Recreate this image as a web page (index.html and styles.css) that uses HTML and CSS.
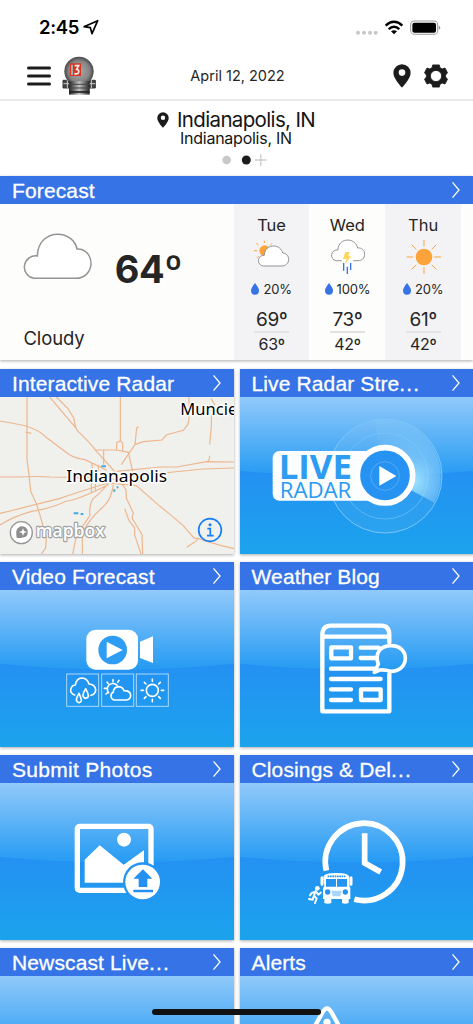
FILE: index.html
```html
<!DOCTYPE html>
<html lang="en">
<head>
<meta charset="utf-8">
<title>Weather</title>
<link rel="stylesheet" href="styles.css">
</head>
<body>
<svg class="defs" width="0" height="0">
  <defs>
    <linearGradient id="lower" x1="0" y1="0" x2="0" y2="1"><stop offset="0" stop-color="#2491f2"/><stop offset=".48" stop-color="#2491f2"/><stop offset="1" stop-color="#1ba3ed"/></linearGradient>
    <linearGradient id="upper" x1="0" y1="0" x2="0" y2="1"><stop offset="0" stop-color="#91c9fa"/><stop offset="1" stop-color="#259bf3"/></linearGradient>
    <radialGradient id="beam" gradientUnits="userSpaceOnUse" cx="535" cy="350" r="160"><stop offset="0" stop-color="#a5e8ff" stop-opacity=".95"/><stop offset=".5" stop-color="#8fd0fa" stop-opacity=".5"/><stop offset="1" stop-color="#8fd0fa" stop-opacity=".12"/></radialGradient>
    <radialGradient id="dome" cx=".5" cy=".5" r=".55"><stop offset="0" stop-color="#aaa"/><stop offset=".65" stop-color="#858585"/><stop offset="1" stop-color="#303030"/></radialGradient>
    <linearGradient id="metal"><stop offset="0" stop-color="#222"/><stop offset=".5" stop-color="#c4c4c4"/><stop offset="1" stop-color="#222"/></linearGradient>
    <symbol id="gloss" viewBox="0 0 702 471"><rect width="702" height="471" fill="url(#lower)"/><path d="M0 0H702V221Q351 256 0 221Z" fill="url(#upper)"/></symbol>
    <symbol id="chevron" viewBox="0 0 10 18"><path d="M1.500 1.300L8 9L1.500 16.700" fill="none" stroke="#fff" stroke-width="1.300"/></symbol>
    <symbol id="pin" viewBox="0 0 18 24"><path d="M9 .3A8.600 8.600 0 0 0 .4 8.900C.4 15 9 23.500 9 23.500S17.600 15 17.600 8.900A8.600 8.600 0 0 0 9 .3ZM9 5.300A3.300 3.300 0 1 1 9 11.900A3.300 3.300 0 0 1 9 5.300Z" fill="#1c1c1c" fill-rule="evenodd"/></symbol>
    <symbol id="drop" viewBox="0 0 8 12"><path d="M4 0C6 3 8 5 8 7.600A4 4.200 0 0 1 0 7.600C0 5 2 3 4 0Z" fill="#3573e6"/></symbol>
  </defs>
</svg>
<div class="screen">
  <header class="status">
    <span class="clock">2:45</span>
    <svg class="locate" viewBox="250 57 50 50"><path d="M253 80L294 62L277 101L272 83Z" fill="none" stroke="#000" stroke-width="5" stroke-linejoin="round"/></svg>
    <svg class="signals" viewBox="360 55 260 50">
      <g fill="#c8c8c8"><circle cx="369" cy="96" r="6"/><circle cx="387" cy="96" r="6"/><circle cx="405" cy="96" r="6"/><circle cx="422" cy="96" r="6"/></g>
      <g fill="none" stroke="#000" stroke-width="7"><path d="M452 75Q477 52 502 75"/><path d="M461 85Q477 71 493 85"/></g><path d="M468 92Q477 85 486 92L477 101Z"/>
      <rect x="527" y="61" width="81" height="40" rx="11" fill="none" stroke="#999" stroke-width="3"/><rect x="532" y="66" width="71" height="30" rx="6"/><path d="M611 75Q616 76 616 81T611 87Z" fill="#999"/>
    </svg>
  </header>
  <nav class="toolbar">
    <svg class="menu" viewBox="0 0 24 20"><path d="M1.500 2H22.500M1.500 10H22.500M1.500 18H22.500" stroke="#1c1c1c" stroke-width="3" stroke-linecap="round"/></svg>
    <svg class="logo" viewBox="187 168 105 118">
      <path d="M208 240H270V284H208Z" fill="url(#metal)"/><path d="M208 276H270" stroke="#222" stroke-width="5"/>
      <path d="M190 241H287V264H190Z" fill="#444" stroke="#333" stroke-width="3"/><path d="M191 251H287M203 240V264M275 240V264" stroke="#ccc" stroke-width="3"/>
      <circle cx="238" cy="214" r="44" fill="url(#dome)"/><path d="M208 244H270V268H208Z" fill="url(#metal)"/><path d="M208 253H270M208 264H270" stroke="#444" stroke-width="3"/>
      <rect x="211" y="190" width="33" height="38" fill="#d83520"/><path d="M217 194V225" stroke="#9bc4d0" stroke-width="5"/><path d="M225 197H237L231 208Q239 209 237 217Q235 224 224 221" fill="none" stroke="#eee" stroke-width="5"/>
    </svg>
    <span class="date">April 12, 2022</span>
    <svg class="place"><use href="#pin"/></svg>
    <svg class="gear" viewBox="0 0 24 24"><path fill="#1c1c1c" fill-rule="evenodd" stroke="#1c1c1c" stroke-width=".8" stroke-linejoin="round" d="M8.700.9H15.300L16 3.700L18.200 4.900L21 4L23.500 8.800L21.600 11V13L23.500 15.200L21 20L18.200 19.100L16 20.300L15.300 23.100H8.700L8 20.300L5.800 19.100L3 20L.5 15.200L2.400 13V11L.5 8.800L3 4L5.800 4.900L8 3.700ZM12 6.400A5.600 5.600 0 1 0 12 17.600A5.600 5.600 0 0 0 12 6.400Z"/></svg>
  </nav>
  <section class="location">
    <div class="city"><svg class="city-pin"><use href="#pin"/></svg><span>Indianapolis, IN</span></div>
    <div class="sub">Indianapolis, IN</div>
    <svg class="pager" viewBox="300 160 145 40"><circle cx="320" cy="181" r="13" fill="#c8c8c8"/><circle cx="379" cy="181" r="13.500" fill="#1c1c1c"/><path d="M405 181H440M422.500 164V199" stroke="#ccc" stroke-width="4"/></svg>
  </section>
  <section class="forecast">
    <h2 class="title"><span>Forecast</span><svg><use href="#chevron"/></svg></h2>
    <div class="forecast-body">
      <div class="now">
        <div class="now-row">
          <svg class="cloud" viewBox="66 190 212 140"><path d="M102 326A33 33 0 1 1 112 259C113 212 146 194 173 194C202 194 226 212 231 238C256 237 273 257 273 281C273 307 253 326 228 326Z" fill="#fff" stroke="#949494" stroke-width="4.500"/></svg>
          <span class="temp">64º</span>
        </div>
        <div class="cond">Cloudy</div>
      </div>
      <div class="day tint">
        <div class="name">Tue</div>
        <svg class="sky" viewBox="70 200 112 116"><circle cx="105" cy="241" r="16" fill="#fda33b"/><path d="M104 211V218M80 218L86 225M73 241H83M127 219L122 225M81 263L87 257" stroke="#fda33b" stroke-width="3"/><path d="M101 287A16 16 0 1 1 104 255C105 234 119 227 132 227C146 227 157 237 159 248C170 248 177 257 177 267C177 280 167 287 156 287Z" fill="#fff" stroke="#949494" stroke-width="3"/></svg>
        <div class="rain"><svg><use href="#drop"/></svg>20%</div>
        <div class="high">69º</div><div class="low">63º</div>
      </div>
      <div class="day">
        <div class="name">Wed</div>
        <svg class="sky" viewBox="296 200 112 116"><path d="M334 271H317A16 16 0 1 1 323 239C323 219 338 209 352 209C367 209 380 220 382 233C395 231 403 241 403 252C403 264 395 271 383 271H369" fill="#fff" stroke="#949494" stroke-width="3"/><path d="M345 245H358L354 258H363L343 282L349 266H338Z" fill="#fdd75b"/><path d="M340 278V301M351 289V311M361 278V299" stroke="#3573e6" stroke-width="4"/></svg>
        <div class="rain"><svg><use href="#drop"/></svg>100%</div>
        <div class="high">73º</div><div class="low">42º</div>
      </div>
      <div class="day tint">
        <div class="name">Thu</div>
        <svg class="sky" viewBox="523 200 112 116"><circle cx="580" cy="260" r="25" fill="#fda33b"/><path d="M580 208V228M580 291V311M528 260H548M611 260H631M543 223L557 237M603 283L617 297M543 297L557 283M603 237L617 223" stroke="#fda33b" stroke-width="3"/></svg>
        <div class="rain"><svg><use href="#drop"/></svg>20%</div>
        <div class="high">61º</div><div class="low">42º</div>
      </div>
    </div>
  </section>
  <main class="tiles">
    <article class="tile">
      <h2 class="title"><span>Interactive Radar</span><svg><use href="#chevron"/></svg></h2>
      <svg class="art" viewBox="0 97 702 471">
        <rect y="97" width="702" height="471" fill="#f0f0ed"/>
        <g fill="none" stroke="#edb68d" stroke-width="3.500">
          <path d="M81 97V285Q88 330 92 380L110 419L124 465L139 520L137 550L124 568"/><path d="M0 169Q45 176 78 184Q120 198 138 218L205 268Q225 281 255 285L320 317M76 202L94 206"/>
          <path d="M149 97L228 190L234 200Q269 232 285 255L345 322M169 97L204 132L221 160L228 190"/><path d="M361 97V228L350 234V255M361 228L368 235V260M285 256H350L385 263L398 320M311 256V300"/>
          <path d="M416 186L410 190L405 240L364 300M405 240L430 231L486 226L500 210L550 197L563 180L567 165V97M633 102L643 118L634 160V185L629 240M629 273Q629 287 621 291"/>
          <path d="M350 320L480 307H530L620 291L702 292M350 340L520 322L610 313L702 310"/><path d="M0 337H50Q120 334 150 337L320 340L400 355M325 355L409 363L474 420L510 449L549 482L583 521H595L615 529L665 543L702 552M598 521L583 533L560 548"/>
          <path d="M325 355Q240 380 180 401L30 439L0 446M325 360Q230 407 200 409Q150 433 95 440Q40 455 0 481M325 355Q310 378 278 403Q266 425 270 453L230 510L218 568M340 360Q334 405 310 426Q270 460 247 505V568"/>
          <path d="M360 350L378 375L379 400L400 445L396 460L426 510L428 568M374 432L387 468L404 490V510L423 568M276 295V320M295 300V320M274 355V385M286 357V378"/>
        </g>
        <path d="M304 305H318M343 374V381M350 369L355 367M221 446H235M242 448H250" stroke="#46a8dc" stroke-width="6"/>
        <g class="label"><text x="541" y="151" textLength="171" lengthAdjust="spacingAndGlyphs">Muncie</text><text x="199" y="351" textLength="302" lengthAdjust="spacingAndGlyphs">Indianapolis</text></g>
        <circle cx="64" cy="504" r="33" fill="#fff" stroke="#969696" stroke-width="4"/><path d="M50 519Q45 492 59 486Q76 481 83 497Q87 518 66 519Q57 521 50 519Z" fill="#8e8e8e"/><path d="M69 490L72 499L81 502L72 505L69 514L66 505L57 502L66 499Z" fill="#fff"/>
        <text class="mapbox" x="107" y="518" textLength="208" lengthAdjust="spacingAndGlyphs">mapbox</text>
        <circle cx="630" cy="496" r="34" fill="none" stroke="#147efb" stroke-width="5"/><circle cx="630" cy="480" r="4.500" fill="#147efb"/><path d="M622 492H631V512M621 513H641" fill="none" stroke="#147efb" stroke-width="5"/>
      </svg>
    </article>
    <article class="tile">
      <h2 class="title"><span>Live Radar Stre<i>...</i></span><svg><use href="#chevron"/></svg></h2>
      <svg class="art" viewBox="0 0 702 471"><use href="#gloss"/><g transform="translate(-14 -97)">
        <g fill="#fff" fill-opacity=".06" stroke="#7ac7fa" stroke-width="3"><circle cx="449" cy="334" r="171"/><circle cx="449" cy="334" r="129" fill="none" stroke-opacity=".6"/></g>
        <path d="M449 334L417 166A171 171 0 0 1 597 414Z" fill="url(#beam)"/>
        <rect x="112" y="259" width="330" height="149" rx="20" fill="#fcfdfe"/><circle cx="449" cy="332" r="83" fill="#2693f2" stroke="#fff" stroke-width="17"/>
        <circle cx="449" cy="334" r="43" fill="none" stroke="#52acf5" stroke-width="3"/><path d="M432 304L483 334L432 363Z" fill="#fff"/>
        <text class="live" x="130" y="343" textLength="220" lengthAdjust="spacingAndGlyphs">LIVE</text><text class="radar" x="133" y="399" textLength="215" lengthAdjust="spacingAndGlyphs">RADAR</text>
      </g></svg>
    </article>
    <article class="tile">
      <h2 class="title"><span>Video Forecast</span><svg><use href="#chevron"/></svg></h2>
      <svg class="art" viewBox="0 0 702 471"><use href="#gloss"/><g transform="translate(0 -97)">
        <rect x="259" y="216" width="155" height="120" rx="28" fill="#fff"/><path d="M420 252L459 236V316L420 301Z" fill="#fff"/><circle cx="338" cy="277" r="43" fill="#2f9df3"/><path d="M320 252L368 277L320 302Z" fill="#fff"/>
        <g fill="none" stroke="#a9d9fb" stroke-width="3"><rect x="200" y="349" width="96" height="97"/><rect x="305" y="349" width="96" height="97"/><rect x="409" y="349" width="96" height="97"/></g>
        <g fill="none" stroke="#fff" stroke-width="4.800" stroke-linecap="round" stroke-linejoin="round">
          <path d="M224 412Q211 408 212 396Q214 383 226 382Q229 362 246 361Q262 362 267 379Q285 380 287 396Q287 409 273 413M237 407Q229 420 229 427Q230 434 237 435Q245 433 244 427Q243 420 237 407ZM257 393Q249 405 249 413Q250 421 257 422Q266 420 265 413Q264 406 257 393Z"/>
          <path d="M342 427A13 13 0 0 1 340 403Q341 388 356 387Q368 388 372 399Q391 399 392 413Q392 426 379 427ZM326 405A16 16 0 1 1 351 383M339 366V372M357 368L353 374M321 373L325 378M313 392H320M318 409L323 405"/>
          <circle cx="457" cy="398" r="18"/><path d="M457 364V371M457 425V432M423 398H430M484 398H491M433 374L438 379M476 417L481 422M433 422L438 417M476 379L481 374"/>
        </g></g></svg>
    </article>
    <article class="tile">
      <h2 class="title"><span>Weather Blog</span><svg><use href="#chevron"/></svg></h2>
      <svg class="art" viewBox="0 0 702 471"><use href="#gloss"/><g transform="translate(-14 -97)" fill="none" stroke="#fff" stroke-width="13" stroke-linecap="round" stroke-linejoin="round">
        <path d="M462 254V232Q462 204 438 204H287Q261 204 261 232V461H462V349M261 237H462M288 269H347V302H288ZM376 270H430M376 301H420M287 333H420M287 364H436M287 395H347M287 427H347M377 395H436V427H377Z"/><path d="M433 337L417 344L429 319C417 289 434 264 467 264C494 264 510 281 510 302C510 326 490 341 467 341C456 338 445 335 433 337Z" stroke-width="11"/>
      </g></svg>
    </article>
    <article class="tile">
      <h2 class="title wide"><span>Submit Photos</span><svg><use href="#chevron"/></svg></h2>
      <svg class="art" viewBox="0 0 702 471"><use href="#gloss"/><g transform="translate(0 -100)">
        <rect x="232" y="230" width="221" height="192" rx="7" fill="none" stroke="#fff" stroke-width="16"/><circle cx="372" cy="270" r="21" fill="#fff"/><path d="M254 330L299 287L371 345L432 302V399H254Z" fill="#fff"/>
        <circle cx="428" cy="397" r="59" fill="#2495f2"/><circle cx="428" cy="397" r="52" fill="#fff"/><path d="M429 359L457 387H442V412H416V387H400ZM400 420H459V428H400Z" fill="#2491f2"/>
      </g></svg>
    </article>
    <article class="tile">
      <h2 class="title"><span>Closings &amp; Del<i>...</i></span><svg><use href="#chevron"/></svg></h2>
      <svg class="art" viewBox="0 0 702 471"><use href="#gloss"/><g transform="translate(-14 -100)">
        <path d="M273 363A116 116 0 1 1 357 449M388 251V340L436 367" fill="none" stroke="#fff" stroke-width="17"/>
        <path d="M264 383Q264 370 303 370Q342 370 342 383V408L345 416V448H340V460Q329 465 320 460V448H288V460Q278 465 267 460V448H263V416L267 408Z" fill="#fff"/>
        <path d="M272 388H302V411H272ZM305 388H335V411H305Z" fill="#2493f2"/><path d="M277 380H330" stroke="#2493f2" stroke-width="5" stroke-dasharray="5 2"/><circle cx="277" cy="427" r="8" fill="#2493f2"/><circle cx="330" cy="427" r="8" fill="#2493f2"/><path d="M288 423H319L315 440H292Z" fill="#a9d6fa"/>
        <path d="M260 384V404M347 384V404" stroke="#fff" stroke-width="9" stroke-linecap="round"/>
        <circle cx="246" cy="416" r="7" fill="#fff"/><path d="M241 424L236 438L244 446L239 460M236 438L232 450L221 448M241 426L229 430L224 437M243 427L249 435L256 429" fill="none" stroke="#fff" stroke-width="6" stroke-linecap="round" stroke-linejoin="round"/>
      </g></svg>
    </article>
    <article class="tile">
      <h2 class="title"><span>Newscast Live<i>...</i></span><svg><use href="#chevron"/></svg></h2>
      <svg class="art" viewBox="0 0 702 471"><use href="#gloss"/></svg>
    </article>
    <article class="tile">
      <h2 class="title"><span>Alerts</span><svg><use href="#chevron"/></svg></h2>
      <svg class="art" viewBox="0 0 702 471"><use href="#gloss"/><path d="M215 168L248 108Q261 86 274 108L307 168" fill="none" stroke="#fff" stroke-width="13"/><circle cx="261" cy="139" r="11" fill="#fff"/></svg>
    </article>
  </main>
  <div class="home-bar"></div>
</div>
</body>
</html>
```
FILE: styles.css
```css
* { box-sizing: border-box; }
body { margin: 0; background: #fff; font-family: Inter, "Liberation Sans", sans-serif; color: #252525; }
svg { display: block; flex: none; }
.defs { position: absolute; }
.screen { position: relative; width: 473px; height: 1024px; overflow: hidden; background: #fff; }
.status { display: flex; height: 54px; padding: 0 31px 0 39px; align-items: center; color: #000; }
.clock { width: 44px; font-size: 18.500px; font-weight: 600; letter-spacing: -.3px; white-space: nowrap; }
.locate { width: 16.700px; height: 16.700px; }
.signals { width: 86.700px; height: 16.700px; margin-left: auto; }
.toolbar { display: flex; align-items: center; height: 47px; padding: 0 25px 3px 27px; border-bottom: 2px solid #ebebeb; }
.menu { width: 24px; height: 20px; margin-top: 1px; }
.logo { width: 35px; height: 39.300px; margin-left: 11px; margin-top: 1px; }
.date { width: 187px; margin: 1px auto 0 47px; text-align: center; font-size: 14.500px; }
.place { width: 18px; height: 24px; margin-right: 13px; margin-top: 1px; }
.gear { width: 24px; height: 24px; margin-top: 1px; }
.location { height: 75px; padding-top: 6px; color: #151515; }
.city { display: flex; height: 25px; align-items: center; padding-left: 157px; gap: 8px; font-size: 20.500px; letter-spacing: -.65px; white-space: nowrap; }
.city-pin { width: 12px; height: 16px; }
.sub { padding-left: 180px; font-size: 16px; line-height: 13px; letter-spacing: -.25px; white-space: nowrap; }
.pager { width: 48.300px; height: 13.300px; margin: 8px 0 0 220px; }
.title { display: flex; align-items: center; justify-content: space-between; height: 28.300px; margin: 0; padding: 0 12.500px 0 12px; background: #3573e6; color: #fff; font: 400 21px/28px "Liberation Sans", Arial, sans-serif; letter-spacing: .13px; -webkit-text-stroke: .3px #fff; white-space: nowrap; }
.title.wide { letter-spacing: .3px; }
.title i { font-style: normal; letter-spacing: 1.100px; }
.title span { padding-top: 2px; }
.title svg { width: 10px; height: 18px; }
.forecast { height: 184px; background: #fdfdfc; box-shadow: 0 1px 3px #0005; }
.forecast-body { display: flex; height: 155.700px; }
.now { width: 233.700px; }
.now-row { display: flex; align-items: center; height: 86px; margin-top: 18px; padding-left: 22px; }
.cloud { width: 70.700px; height: 46.700px; margin-bottom: 18px; }
.temp { margin: 7px 0 0 22px; font-size: 38px; font-weight: 700; line-height: 50px; letter-spacing: -.4px; }
.cond { padding: 18px 0 0 23.500px; font-size: 18.500px; line-height: 24px; letter-spacing: -.15px; }
.day { width: 75.800px; display: flex; flex-direction: column; align-items: center; padding-top: 10px; }
.tint { background: #f3f3f6; }
.name { font-size: 16.500px; line-height: 23px; }
.sky { width: 37.300px; height: 38.700px; }
.rain { display: flex; align-items: center; gap: 4px; height: 18px; margin-top: 4px; font-size: 13px; letter-spacing: -.2px; }
.rain svg { width: 8px; height: 12px; }
.high { width: 35px; height: 27px; margin-top: 8px; border-bottom: 2px solid #e2e2e2; font-size: 19px; line-height: 28px; text-align: center; white-space: nowrap; letter-spacing: -.3px; }
.low { font-size: 16px; line-height: 23px; letter-spacing: -.3px; }
.tiles { display: grid; grid-template-columns: 234px 234px; column-gap: 5.500px; grid-auto-rows: 185.300px; row-gap: 7.700px; margin-top: 9px; }
.tile { box-shadow: 0 1px 3px #0005; }
.art { width: 234px; height: 157px; }
.label { font: 50px "Noto Sans", sans-serif; fill: #000; stroke: #fff; stroke-width: 9px; stroke-linejoin: round; paint-order: stroke; }
.mapbox { font: 600 52px "Open Sans", sans-serif; fill: #fff; stroke: #a2a2a2; stroke-width: 7px; stroke-linejoin: round; paint-order: stroke; }
.live { font: 700 104px "Open Sans", sans-serif; fill: #2e9cf3; }
.radar { font: 400 65px "Open Sans", sans-serif; fill: #289af2; }
.home-bar { position: absolute; left: 152px; top: 1009px; width: 169px; height: 5.500px; border-radius: 3px; background: #111; }
```
